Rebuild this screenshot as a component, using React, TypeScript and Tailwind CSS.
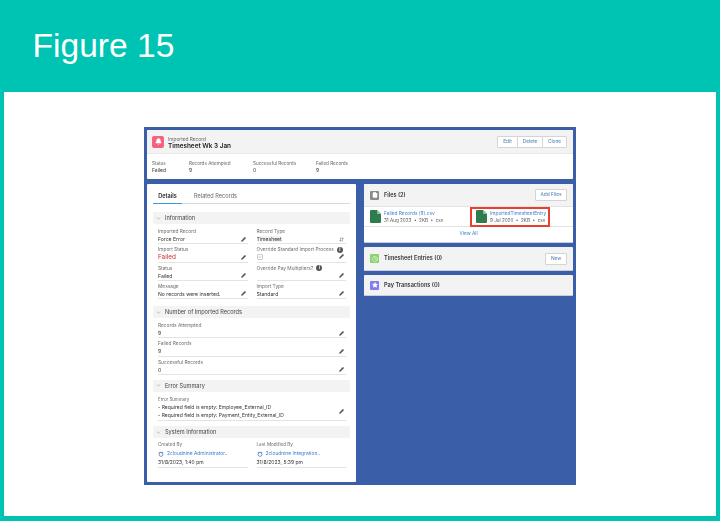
import { Bell, ChevronDown, Pencil, ArrowDownUp, Check, Star, Clock, File } from 'lucide-react';
import type { ReactNode } from 'react';

function Edit() {
  return <Pencil className="w-[5px] h-[5px] text-[#555] fill-[#555] shrink-0" strokeWidth={2} />;
}

function Info() {
  return (
    <span className="w-[6px] h-[6px] rounded-full bg-[#555] text-white text-[4.4px] leading-[6px] text-center font-bold">
      i
    </span>
  );
}

function Field({ label, extra, action, children }: { label: string; extra?: ReactNode; action?: ReactNode; children: ReactNode }) {
  return (
    <div className="h-[18.33px] border-b border-[#e3e3e3] pt-[2px]">
      <div className="flex items-center gap-[3px] text-[4.8px] leading-[7px] text-[#6b6b6b]">
        {label}
        {extra}
      </div>
      <div className="flex items-center justify-between text-[5.1px] leading-[8px] text-[#333] pr-[2px]">
        <div className="truncate">{children}</div>
        {action ?? <Edit />}
      </div>
    </div>
  );
}

function Section({ title, className, children }: { title: string; className: string; children: ReactNode }) {
  return (
    <div className={className}>
      <div className="h-[12px] bg-[#f3f3f3] rounded-[1px] flex items-center gap-[4px] pl-[3px] text-[5.6px] text-[#444]">
        <ChevronDown className="w-[5px] h-[5px] text-[#777]" />
        {title}
      </div>
      <div className="pl-[5px] pr-[4px] pt-[2px]">{children}</div>
    </div>
  );
}

function CsvIcon() {
  return (
    <svg viewBox="0 0 11 13" className="w-[11px] h-[13px] shrink-0">
      <path d="M0 1a1 1 0 0 1 1-1h6l4 4v8a1 1 0 0 1-1 1H1a1 1 0 0 1-1-1z" fill="#2f7d4c" />
      <path d="M7 0l4 4H8a1 1 0 0 1-1-1z" fill="#8fc0a0" />
    </svg>
  );
}

function UserBadge() {
  return (
    <svg viewBox="0 0 8 8" className="w-[6px] h-[6px] shrink-0 mr-[3px]">
      <path d="M1 1.2h6v1H1z" fill="#5b80c0" />
      <circle cx="4" cy="4.6" r="2.6" fill="none" stroke="#5b80c0" strokeWidth="1.1" />
    </svg>
  );
}

function FileItem({ name, meta, boxed }: { name: string; meta: string; boxed?: boolean }) {
  return (
    <div className={`flex items-center gap-[2px] ${boxed ? 'border-2 border-[#e8402f] h-[20px] w-[80px] pl-[4px]' : 'pl-[6px] w-[106px]'}`}>
      <CsvIcon />
      <div className="ml-[1px]">
        <div className="text-[4.8px] leading-[7px] text-[#3b7fd0]">{name}</div>
        <div className="text-[4.6px] leading-[7px] text-[#555] whitespace-pre">{meta}</div>
      </div>
    </div>
  );
}

function OutlineButton({ children, className }: { children: ReactNode; className: string }) {
  return (
    <div className={`h-[12px] bg-white border border-[#d4d4d4] rounded-[1px] flex items-center justify-center text-[4.8px] text-[#4a78b0] ${className}`}>
      {children}
    </div>
  );
}

function Person({ label, name, date }: { label: string; name: string; date: string }) {
  return (
    <div className="border-b border-[#e3e3e3]">
      <div className="text-[4.6px] leading-[8px] text-[#6b6b6b]">{label}</div>
      <div className="flex items-center text-[4.9px] leading-[9px] text-[#3b7fd0]">
        <UserBadge />
        {name}
      </div>
      <div className="text-[5px] leading-[9px] text-[#333]">{date}</div>
    </div>
  );
}

export default function App() {
  const stats = [
    { label: 'Status', value: 'Failed', w: 'w-[37px]' },
    { label: 'Records Attempted', value: '9', w: 'w-[64px]' },
    { label: 'Successful Records', value: '0', w: 'w-[63px]' },
    { label: 'Failed Records', value: '9', w: 'w-[50px]' },
  ];

  return (
    <div className="w-[720px] h-[521px] bg-[#00c4b3] flex flex-col font-['Liberation_Sans',Arial,sans-serif]">
      <div className="h-[92px] pl-[32.5px] pt-[26px] text-white text-[33.6px] leading-[40px]">Figure 15</div>
      <div className="mx-[4px] h-[424px] bg-white pt-[35px] pl-[140px]">
        <div className="w-[432px] h-[358px] bg-[#3a5ea8] pt-[3px] px-[3px] font-['Inter',sans-serif] blur-[0.35px]">
          <div className="h-[49px] bg-white rounded-[1px] overflow-hidden">
            <div className="h-[24px] bg-[#f3f3f3] flex items-center pl-[5px] pr-[6px] border-b border-[#e8e8e8]">
              <div className="w-[12px] h-[12px] rounded-[2px] bg-[#f4627f] flex items-center justify-center">
                <Bell className="w-[7px] h-[7px] text-white fill-white" />
              </div>
              <div className="ml-[4px] mt-[2px]">
                <div className="text-[4.8px] leading-[6px] text-[#666]">Imported Record</div>
                <div className="text-[6.4px] leading-[8px] font-semibold text-[#222]">Timesheet Wk 3 Jan</div>
              </div>
              <div className="ml-auto flex">
                <OutlineButton className="w-[21px]">Edit</OutlineButton>
                <OutlineButton className="w-[26px] -ml-px">Delete</OutlineButton>
                <OutlineButton className="w-[25px] -ml-px">Clone</OutlineButton>
              </div>
            </div>
            <div className="flex pl-[5px] pt-[6.5px]">
              {stats.map((s) => (
                <div key={s.label} className={s.w}>
                  <div className="text-[4.6px] leading-[6px] text-[#666]">{s.label}</div>
                  <div className="text-[5px] leading-[7px] text-[#333]">{s.value}</div>
                </div>
              ))}
            </div>
          </div>

          <div className="flex gap-[8px] mt-[5px] items-start">
            <div className="w-[209px] h-[298px] bg-white rounded-[1px] px-[6px]">
              <div className="h-[20px] border-b border-[#d8d8d8] flex text-[5.6px] mb-[8px]">
                <div className="w-[29px] h-[20px] pt-[5px] text-center leading-[14px] font-semibold text-[#222] border-b border-[#3b9ae0]">Details</div>
                <div className="ml-[12px] pt-[5px] leading-[14px] text-[#666]">Related Records</div>
              </div>

              <Section title="Information" className="mb-[6.7px]">
                <div className="grid grid-cols-2 gap-x-[9px]">
                  <Field label="Imported Record">Force Error</Field>
                  <Field label="Record Type" action={<ArrowDownUp className="w-[5px] h-[5px] text-[#555]" />}>
                    <span className="bg-[#f3f3f3]">Timesheet</span>
                  </Field>
                  <Field label="Import Status"><span className="text-[6.4px] text-[#c8322e]">Failed</span></Field>
                  <Field label="Override Standard Import Process" extra={<Info />}>
                    <span className="mt-[1px] w-[6px] h-[6px] border border-[#ccc] rounded-[1px] flex items-center justify-center">
                      <Check className="w-[4px] h-[4px] text-[#555]" />
                    </span>
                  </Field>
                  <Field label="Status">Failed</Field>
                  <Field label="Override Pay Multipliers?" extra={<Info />}>&nbsp;</Field>
                  <Field label="Message">No records were inserted.</Field>
                  <Field label="Import Type">Standard</Field>
                </div>
              </Section>

              <Section title="Number of Imported Records" className="mb-[5px]">
                <Field label="Records Attempted">9</Field>
                <Field label="Failed Records">9</Field>
                <Field label="Successful Records">0</Field>
              </Section>

              <Section title="Error Summary" className="mb-[5px]">
                <div className="border-b border-[#e3e3e3] pb-[1px] pt-[2.5px]">
                  <div className="text-[4.4px] leading-[7px] text-[#6b6b6b]">Error Summary</div>
                  <div className="flex items-center justify-between text-[5px] leading-[8px] text-[#333] pr-[2px]">
                    <div>
                      <div>- Required field is empty: Employee_External_ID</div>
                      <div>- Required field is empty: Payment_Entity_External_ID</div>
                    </div>
                    <Edit />
                  </div>
                </div>
              </Section>

              <Section title="System Information" className="mb-0">
                <div className="grid grid-cols-2 gap-x-[9px] pt-[1px]">
                  <Person label="Created By" name="2cloudnine Administrator.." date="31/8/2023, 1:40 pm" />
                  <Person label="Last Modified By" name="2cloudnine Integration.." date="31/8/2023, 5:39 pm" />
                </div>
              </Section>
            </div>

            <div className="w-[209px] flex flex-col gap-[4px]">
              <div className="h-[59px] bg-white rounded-[1px] overflow-hidden border-b border-[#c9ced8]">
                <div className="h-[23px] bg-[#f3f3f3] border-b border-[#e3e3e3] flex items-center pl-[6px] pr-[6px]">
                  <div className="w-[9px] h-[9px] rounded-[1px] bg-[#8a8a8a] flex items-center justify-center">
                    <File className="w-[6px] h-[6px] text-white fill-white" />
                  </div>
                  <div className="ml-[5px] text-[5.6px] font-semibold text-[#333]">Files (2)</div>
                  <OutlineButton className="ml-auto w-[32px]">Add Files</OutlineButton>
                </div>
                <div className="h-[20px] flex items-center border-b border-[#e3e3e3]">
                  <FileItem name="Failed Records (9).csv" meta="31 Aug 2023  •  2KB  •  csv" />
                  <FileItem boxed name="ImportedTimesheetEntry" meta="9 Jul 2020  •  2KB  •  csv" />
                </div>
                <div className="h-[14px] flex items-center justify-center text-[4.8px] text-[#3b7fd0]">View All</div>
              </div>

              <div className="h-[24px] bg-[#f3f3f3] rounded-[1px] border-b border-[#c9ced8] flex items-center pl-[6px] pr-[6px]">
                <div className="w-[9px] h-[9px] rounded-[1px] bg-[#8ad36f] flex items-center justify-center">
                  <Clock className="w-[6px] h-[6px] text-white" />
                </div>
                <div className="ml-[5px] text-[5.6px] font-semibold text-[#333]">Timesheet Entries (0)</div>
                <OutlineButton className="ml-auto w-[22px]">New</OutlineButton>
              </div>

              <div className="h-[21px] bg-[#f3f3f3] rounded-[1px] border-b border-[#c9ced8] flex items-center pl-[6px]">
                <div className="w-[9px] h-[9px] rounded-[1px] bg-[#7f7cf0] flex items-center justify-center">
                  <Star className="w-[6px] h-[6px] text-white fill-white" />
                </div>
                <div className="ml-[5px] text-[5.6px] font-semibold text-[#333]">Pay Transactions (0)</div>
              </div>
            </div>
          </div>
        </div>
      </div>
    </div>
  );
}
